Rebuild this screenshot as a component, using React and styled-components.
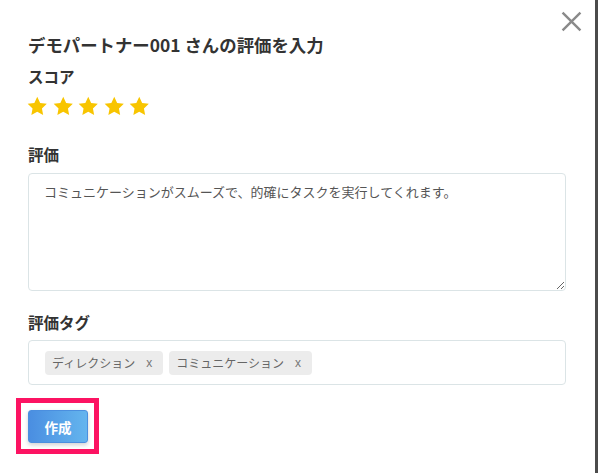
import React from "react";
import styled, { createGlobalStyle } from "styled-components";

const Global = createGlobalStyle`
  html, body { margin: 0; padding: 0; }
  body {
    background: #4b4b4b;
    font-family: "Noto Sans CJK JP", "Noto Sans", sans-serif;
    color: #333;
  }
`;

const Page = styled.div`
  display: flex;
  height: 473px;
  overflow: hidden;
`;

const Modal = styled.div`
  position: relative;
  width: 595px;
  height: 473px;
  background: #fff;
  box-sizing: border-box;
  padding: 33px 29px 0 28px;
  display: flex;
  flex-direction: column;
`;

const Close = styled.button`
  position: absolute;
  top: 9px;
  right: 12px;
  width: 24px;
  height: 24px;
  padding: 0;
  border: 0;
  background: none;
  display: flex;
  align-items: center;
  justify-content: center;
  cursor: pointer;
`;

const Title = styled.h2`
  margin: 0;
  font-size: 17.4px;
  line-height: 24px;
  font-weight: 700;
  color: #333;
`;

const Label = styled.div`
  font-size: 15.5px;
  line-height: 24px;
  font-weight: 700;
  color: #333;
  margin-top: ${(p) => p.$mt}px;
`;

const Stars = styled.div`
  display: flex;
  gap: 5px;
  margin-top: 8px;
  margin-left: -1px;
`;

const TextArea = styled.textarea`
  margin-top: 7px;
  width: 100%;
  height: 118px;
  box-sizing: border-box;
  border: 1px solid #dbe4e6;
  border-radius: 4px;
  padding: 8px 15px;
  font-family: "Noto Sans CJK JP", "Noto Sans", sans-serif;
  font-size: 13px;
  line-height: 20px;
  color: #555;
  resize: vertical;
  outline: none;
`;

const TagBox = styled.div`
  margin-top: 6px;
  height: 45px;
  box-sizing: border-box;
  border: 1px solid #dbe4e6;
  border-radius: 4px;
  padding: 0 16px;
  display: flex;
  align-items: center;
  gap: 6px;
`;

const Tag = styled.span`
  display: inline-flex;
  align-items: center;
  height: 24px;
  padding: 0 11px 0 7px;
  background: #ececec;
  border-radius: 4px;
  font-size: 12px;
  color: #666;
  gap: 11px;
`;

const TagX = styled.span`
  font-family: "Liberation Sans", sans-serif;
  font-size: 12px;
  color: #777;
`;

const Actions = styled.div`
  margin-top: 13px;
  margin-left: -12px;
  display: flex;
`;

const Highlight = styled.div`
  display: inline-flex;
  border: 5px solid #fc1362;
  padding: 7px 6px 6px 7px;
`;

const Button = styled.button`
  width: 60px;
  height: 33px;
  border: 1px solid #4b8fdf;
  border-radius: 3px;
  background: linear-gradient(to right, #4a8ee1, #64b5ee);
  color: #fff;
  font-family: "Noto Sans CJK JP", "Noto Sans", sans-serif;
  font-size: 13.5px;
  font-weight: 700;
  box-shadow: 0 2px 4px rgba(0, 0, 0, 0.18);
  cursor: pointer;
`;

const Star = () => (
  <svg width="20.5" height="20" viewBox="0 0 24 23">
    <path
      d="M12 0.8l3.4 7.1 7.8 1-5.7 5.4 1.4 7.7L12 18.3l-6.9 3.7 1.4-7.7L0.8 8.9l7.8-1z"
      fill="#f8c500"
    />
  </svg>
);

export default function App() {
  return (
    <>
      <Global />
      <Page>
        <Modal>
          <Close aria-label="close">
            <svg width="21" height="21" viewBox="0 0 20 20">
              <path d="M1.5 1.5L18.5 18.5M18.5 1.5L1.5 18.5" stroke="#8a8a8a" strokeWidth="2.3" />
            </svg>
          </Close>
          <Title>デモパートナー001 さんの評価を入力</Title>
          <Label $mt={7}>スコア</Label>
          <Stars>
            {[0, 1, 2, 3, 4].map((i) => (
              <Star key={i} />
            ))}
          </Stars>
          <Label $mt={26}>評価</Label>
          <TextArea defaultValue="コミュニケーションがスムーズで、的確にタスクを実行してくれます。" />
          <Label $mt={19}>評価タグ</Label>
          <TagBox>
            <Tag>
              ディレクション<TagX>x</TagX>
            </Tag>
            <Tag>
              コミュニケーション<TagX>x</TagX>
            </Tag>
          </TagBox>
          <Actions>
            <Highlight>
              <Button>作成</Button>
            </Highlight>
          </Actions>
        </Modal>
      </Page>
    </>
  );
}
